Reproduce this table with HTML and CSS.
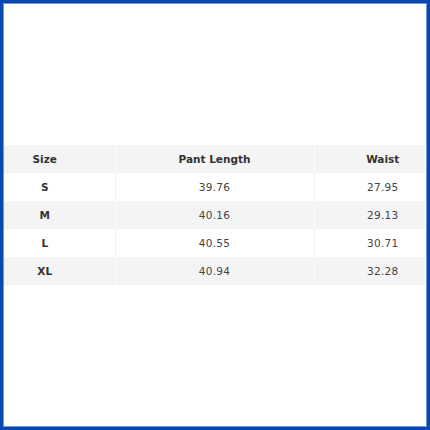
FILE: index.html
```html
<!DOCTYPE html>
<html>
<head>
<meta charset="utf-8">
<link rel="stylesheet" href="styles.css">
</head>
<body>
<div class="frame">
  <div class="inner">
    <table class="size-table">
      <thead>
        <tr><th class="c1">Size</th><th class="c2">Pant Length</th><th class="c3">Waist</th></tr>
      </thead>
      <tbody>
        <tr><td class="c1 b">S</td><td class="c2">39.76</td><td class="c3">27.95</td></tr>
        <tr><td class="c1 b">M</td><td class="c2">40.16</td><td class="c3">29.13</td></tr>
        <tr><td class="c1 b">L</td><td class="c2">40.55</td><td class="c3">30.71</td></tr>
        <tr><td class="c1 b">XL</td><td class="c2">40.94</td><td class="c3">32.28</td></tr>
      </tbody>
    </table>
  </div>
</div>
</body>
</html>
```

FILE: styles.css
```css
html, body {
  margin: 0;
  padding: 0;
  background: #fff;
}
.frame {
  width: 430px;
  height: 430px;
  box-sizing: border-box;
  border: 3px solid #0a47b0;
  background: #fff;
}
.inner {
  height: 100%;
  box-sizing: border-box;
  border: 1px solid #6f97dc;
  display: flex;
  align-items: center;
  padding: 0 1px 0 0;
}
.size-table {
  width: 421px;
  border-collapse: collapse;
  font-family: "DejaVu Sans", Verdana, sans-serif;
  font-size: 10.5px;
  color: #444;
}
.size-table th, .size-table td {
  height: 28px;
  padding: 0;
  text-align: center;
  border-right: 1px solid #fbfbfb;
}
.size-table th:last-child, .size-table td:last-child {
  border-right: none;
}
.size-table th {
  font-weight: bold;
  color: #333;
}
.size-table thead tr {
  background: #f4f4f4;
}
.size-table tbody tr:nth-child(even) {
  background: #f4f4f4;
}
.size-table tbody tr:nth-child(odd) {
  background: #fff;
}
.size-table tbody tr:nth-child(odd) td {
  border-right-color: #f3f3f3;
}
.c1 {
  width: 111px;
  box-sizing: border-box;
  padding-right: 29px !important;
}
.c2 {
  width: 198px;
}
.c3 {
  box-sizing: border-box;
  padding-left: 26px !important;
}
.b {
  font-weight: bold;
  color: #333;
}
.size-table td.c2, .size-table td.c3 {
  letter-spacing: 0.3px;
}
```
